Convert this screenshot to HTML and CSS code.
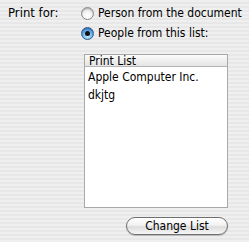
FILE: index.html
```html
<!DOCTYPE html>
<html lang="en">
<head>
    <meta charset="UTF-8">
    <title>Print for</title>
    <link rel="stylesheet" href="styles.css">
</head>
<body>

<div class="panel">
    <div class="label">Print for:</div>
    <div class="options">
        <div class="radio-row">
            <span class="radio"></span>
            <span>Person from the document</span>
        </div>
        <div class="radio-row">
            <span class="radio checked"></span>
            <span>People from this list:</span>
        </div>

        <div class="list">
            <div class="list-header">Print List</div>
            <div class="list-row">Apple Computer Inc.</div>
            <div class="list-row">dkjtg</div>
        </div>

        <div class="actions">
            <button class="pill">Change List</button>
        </div>
    </div>
</div>

</body>
</html>
```

FILE: styles.css
```css
body {
    margin: 0;
    width: 249px;
    height: 242px;
    overflow: hidden;
    font-family: "DejaVu Sans", sans-serif;
    font-stretch: condensed;
    font-size: 12px;
    color: #000;
    background: repeating-linear-gradient(to bottom, #efefef 0, #efefef 2px, #e7e7e7 2px, #e7e7e7 4px);
}

.panel {
    display: grid;
    grid-template-columns: 81px 168px;
    padding-top: 6px;
}

.label {
    padding-left: 8px;
    font-size: 13px;
    line-height: 14px;
    white-space: nowrap;
}

.radio-row {
    display: flex;
    align-items: center;
    gap: 4px;
    height: 14px;
    margin-bottom: 6px;
    white-space: nowrap;
}

/* Aqua radio */
.radio {
    flex: none;
    width: 11px;
    height: 11px;
    border-radius: 50%;
    border: 1px solid #8a8a8a;
    background: radial-gradient(circle at 50% 70%, #ffffff 0, #f2f2f2 45%, #c8c8c8 100%);
    box-shadow: inset 0 1px 1px rgba(0, 0, 0, 0.2);
    position: relative;
}

.radio.checked {
    border-color: #34598a;
    background: radial-gradient(circle at 50% 75%, #c8ecff 0, #6fb6ee 45%, #2a6fc4 100%);
}

.radio.checked::after {
    content: "";
    position: absolute;
    left: 3px;
    top: 3px;
    width: 5px;
    height: 5px;
    border-radius: 50%;
    background: #111;
}

.list {
    margin-left: 3px;
    margin-top: 14px;
    width: 142px;
    height: 152px;
    border: 1px solid #a8a8a8;
    background: #fff;
}

.list-header {
    height: 11px;
    line-height: 12px;
    padding-left: 4px;
    border-bottom: 1px solid #b5b5b5;
    background: linear-gradient(to bottom, #fbfbfb, #e4e4e4);
}

.list-row {
    height: 18px;
    line-height: 20px;
    padding-left: 3px;
    white-space: nowrap;
}

.actions {
    display: flex;
    justify-content: flex-end;
    width: 147px;
    margin-top: 9px;
}

.pill {
    width: 102px;
    height: 18px;
    padding: 0;
    font-family: "DejaVu Sans", sans-serif;
    font-stretch: condensed;
    font-size: 12px;
    color: #000;
    border: 1px solid #6f6f6f;
    border-radius: 9px;
    background: linear-gradient(to bottom, #ffffff 0, #f2f2f2 45%, #dcdcdc 55%, #f6f6f6 100%);
    box-shadow: 0 1px 1px rgba(0, 0, 0, 0.2);
}
```
